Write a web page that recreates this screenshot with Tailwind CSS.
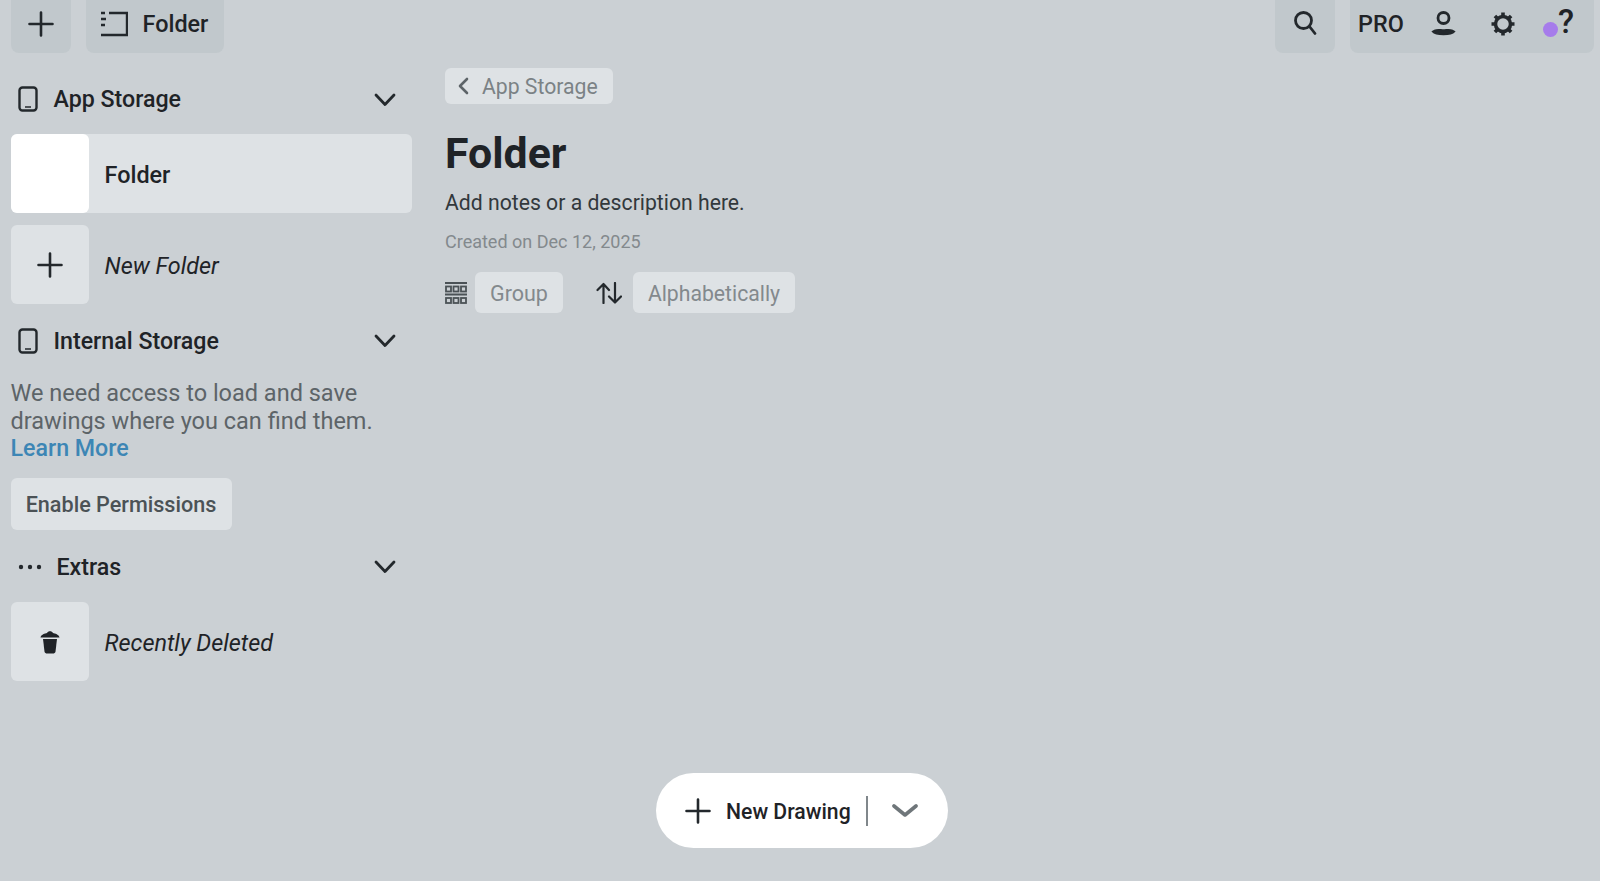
<!DOCTYPE html>
<html lang="en">
<head>
  <meta charset="UTF-8" />
  <title>Folder</title>
  <script src="https://cdn.jsdelivr.net/npm/@tailwindcss/browser@4"></script>
</head>
<body class="relative w-[1600px] h-[881px] overflow-hidden bg-[#cbd0d4] text-[#1f2327] font-['Roboto',sans-serif]">

  <!-- Top bar -->
  <header class="flex h-[53px] pl-[10.500px] pr-[6px] justify-between">
    <div class="flex gap-[15px]">
      <div class="w-[60px] h-full bg-[#c1c8cc] rounded-b-[8px] flex items-center justify-center pb-[6px]">
        <svg class="w-[26px] h-[26px]" viewBox="0 0 26 26" fill="none" stroke="#23282c" stroke-width="2.600" stroke-linecap="round"><path d="M13 1.500V24.500M1.500 13H24.500"/></svg>
      </div>
      <div class="w-[138px] h-full bg-[#c1c8cc] rounded-b-[8px] flex items-center pl-[14px] gap-[15px] pb-[6px]">
        <svg class="w-[28px] h-[26px]" viewBox="0 0 28 26" fill="none" stroke="#23282c" stroke-width="2.400"><path d="M9 2H27V24H1"/><path d="M1 2H5M1 8H6M1 14H5"/></svg>
        <span class="text-[23.400px] font-medium pt-[2px]">Folder</span>
      </div>
    </div>
    <div class="flex gap-[15px]">
      <div class="w-[60px] h-full bg-[#c1c8cc] rounded-b-[8px] flex items-center justify-center pb-[8px]">
        <svg class="w-[24px] h-[26px]" viewBox="0 0 24 26" fill="none" stroke="#23282c" stroke-width="2.800" stroke-linecap="round"><circle cx="10.500" cy="10.500" r="8"/><path d="M16.500 16.500L22 23.500"/></svg>
      </div>
      <div class="w-[244px] h-full bg-[#c1c8cc] rounded-b-[8px] flex items-center pl-[8px] pb-[6px]">
        <span class="text-[23.400px] font-medium w-[47px] shrink-0 pt-[2px]">PRO</span>
        <svg class="ml-[26px] w-[25px] h-[26px] shrink-0" viewBox="0 0 25 26" fill="none" stroke="#23282c" stroke-width="2.800"><circle cx="12.500" cy="7" r="5.500"/><path fill="#23282c" stroke-width="1.500" d="M1.500 20.500C5 17.500 9 19 12.500 19S20 17.500 23.500 20.500C20 24.500 5 24.500 1.500 20.500Z"/></svg>
        <svg class="ml-[34px] w-[26px] h-[26px] shrink-0" viewBox="0 0 26 26" fill="none" stroke="#23282c"><circle cx="13" cy="13" r="7.500" stroke-width="3.500"/><path stroke-width="3.600" d="M13 1.500V5M13 21V24.500M1.500 13H5M21 13H24.500M4.900 4.900L7.300 7.300M18.700 18.700L21.100 21.100M21.100 4.900L18.700 7.300M7.300 18.700L4.900 21.100"/></svg>
        <span class="relative ml-[24px] w-[36px] h-[32px] shrink-0">
          <span class="absolute left-[3px] top-[14px] w-[15px] h-[15px] rounded-full bg-[#a67ceb]"></span>
          <span class="absolute left-[18px] top-[-5px] text-[33px] font-medium leading-[38px]">?</span>
        </span>
      </div>
    </div>
  </header>

  <div class="flex pl-[10.500px]">
    <!-- Sidebar -->
    <aside class="w-[401.500px] shrink-0">
      <div class="flex items-center h-[81px] pt-[12px] pl-[7px] pr-[16px] gap-[16px]">
        <svg class="w-[20px] h-[26px] mb-[2px]" viewBox="0 0 20 26" fill="none" stroke="#23282c" stroke-width="2.400"><rect x="1.500" y="1.500" width="17" height="23" rx="3"/><path stroke-width="1.500" d="M7 21H13"/></svg>
        <span class="text-[23.200px] font-medium flex-1">App Storage</span>
        <svg class="w-[22px] h-[14px]" viewBox="0 0 22 14" fill="none" stroke="#23282c" stroke-width="2.800" stroke-linecap="round" stroke-linejoin="round"><path d="M2 2L11 11.500L20 2"/></svg>
      </div>
      <div class="flex items-center h-[79px] bg-[#dee2e5] rounded-[6px]">
        <div class="w-[78.500px] h-full bg-white rounded-[6px]"></div>
        <span class="ml-[15.500px] pt-[4px] text-[23.400px] font-medium">Folder</span>
      </div>
      <div class="flex items-center h-[79px] mt-[12px]">
        <div class="w-[78.500px] h-full bg-[#dee2e5] rounded-[6px] flex items-center justify-center">
          <svg class="w-[26px] h-[26px]" viewBox="0 0 26 26" fill="none" stroke="#23282c" stroke-width="2.600" stroke-linecap="round"><path d="M13 1.500V24.500M1.500 13H24.500"/></svg>
        </div>
        <span class="ml-[15.500px] pt-[4px] text-[23.400px] italic">New Folder</span>
      </div>

      <div class="flex items-center h-[74px] pl-[7px] pr-[16px] gap-[16px]">
        <svg class="w-[20px] h-[26px]" viewBox="0 0 20 26" fill="none" stroke="#23282c" stroke-width="2.400"><rect x="1.500" y="1.500" width="17" height="23" rx="3"/><path stroke-width="1.500" d="M7 21H13"/></svg>
        <span class="text-[23.200px] font-medium flex-1">Internal Storage</span>
        <svg class="w-[22px] h-[14px]" viewBox="0 0 22 14" fill="none" stroke="#23282c" stroke-width="2.800" stroke-linecap="round" stroke-linejoin="round"><path d="M2 2L11 11.500L20 2"/></svg>
      </div>
      <p class="text-[23.500px] leading-[27.500px] text-[#5d6468] mt-[2px]">We need access to load and save drawings where you can find them. <span class="block font-medium text-[#3d86b5] text-[23.200px]">Learn More</span></p>
      <div class="mt-[15.500px] w-[221px] h-[52px] pt-[3px] bg-[#dee2e5] rounded-[6px] flex items-center justify-center text-[21.600px] font-medium text-[#4b5256]">Enable Permissions</div>

      <div class="flex items-center h-[72px] pt-[2px] pl-[7px] pr-[16px] gap-[15px]">
        <svg class="w-[24px] h-[6px]" viewBox="0 0 24 6" fill="#23282c"><circle cx="3" cy="3" r="2.200"/><circle cx="12" cy="3" r="2.200"/><circle cx="21" cy="3" r="2.200"/></svg>
        <span class="text-[23.200px] font-medium flex-1">Extras</span>
        <svg class="w-[22px] h-[14px]" viewBox="0 0 22 14" fill="none" stroke="#23282c" stroke-width="2.800" stroke-linecap="round" stroke-linejoin="round"><path d="M2 2L11 11.500L20 2"/></svg>
      </div>
      <div class="flex items-center h-[79px]">
        <div class="w-[78.500px] h-full bg-[#dee2e5] rounded-[6px] flex items-center justify-center">
          <svg class="w-[20px] h-[24px]" viewBox="0 0 20 24" fill="#1f2327"><path d="M3 9H17L15.500 21.500C15.300 23 14 23.500 13 23.500H7C6 23.500 4.700 23 4.500 21.500Z"/><path d="M0.500 7.500C1 4.500 5 3.500 7 3C8 0.500 12 0.500 13 3C15 3.500 19 4.500 19.500 7.500Z"/></svg>
        </div>
        <span class="ml-[15.500px] pt-[4px] text-[23.400px] italic">Recently Deleted</span>
      </div>
    </aside>

    <!-- Main content -->
    <main class="ml-[33px] pt-[15px]">
      <div class="flex items-center w-[168px] h-[36px] bg-[#dee2e5] rounded-[6px] pl-[12px] gap-[13px] text-[21.200px] text-[#7b8286]">
        <svg class="w-[12px] h-[18px]" viewBox="0 0 12 18" fill="none" stroke="#5d6468" stroke-width="2.600" stroke-linecap="round" stroke-linejoin="round"><path d="M10 2L3 9L10 16"/></svg>
        <span class="pt-[2px]">App Storage</span>
      </div>
      <h1 class="mt-[24px] text-[42.800px] leading-[50px] font-bold">Folder</h1>
      <p class="mt-[12px] text-[21.200px] leading-[26px] text-[#32383c]">Add notes or a description here.</p>
      <p class="mt-[14px] text-[18px] leading-[24px] text-[#83898d]">Created on Dec 12, 2025</p>
      <div class="mt-[18px] flex items-center">
        <svg class="w-[22px] h-[24px]" viewBox="0 0 22 24" fill="none" stroke="#4b5256" stroke-width="1.800"><path d="M0 2H22M0 13.500H22"/><rect x="1" y="5.500" width="5" height="5"/><rect x="8.500" y="5.500" width="5" height="5"/><rect x="16" y="5.500" width="5" height="5"/><rect x="1" y="17" width="5" height="5"/><rect x="8.500" y="17" width="5" height="5"/><rect x="16" y="17" width="5" height="5"/></svg>
        <div class="ml-[8px] w-[88px] h-[41px] pt-[3px] bg-[#dee2e5] rounded-[6px] flex items-center justify-center text-[21.500px] text-[#83898d]">Group</div>
        <svg class="ml-[33px] w-[26px] h-[22px]" viewBox="0 0 26 22" fill="none" stroke="#23282c" stroke-width="2.200" stroke-linecap="round" stroke-linejoin="round"><path d="M7.500 21V2M1.500 8L7.500 2L13 8"/><path d="M19 1V20M13 14.500L19 20.500L25 14.500"/></svg>
        <div class="ml-[11px] w-[162px] h-[41px] pt-[2px] bg-[#dee2e5] rounded-[6px] flex items-center justify-center text-[21.200px] text-[#83898d]">Alphabetically</div>
      </div>
    </main>
  </div>

  <!-- Floating new drawing button -->
  <div class="absolute left-[656px] top-[773px] w-[292px] h-[75px] bg-white rounded-full flex items-center pl-[29px]">
    <svg class="w-[26px] h-[26px]" viewBox="0 0 26 26" fill="none" stroke="#23282c" stroke-width="2.600" stroke-linecap="round"><path d="M13 1.500V24.500M1.500 13H24.500"/></svg>
    <span class="ml-[15px] pt-[2px] text-[21.200px] font-medium w-[126px] whitespace-nowrap">New Drawing</span>
    <span class="ml-[14px] w-[2px] h-[30px] bg-[#80878b]"></span>
    <svg class="ml-[24px] w-[26px] h-[14px]" viewBox="0 0 26 14" fill="none" stroke="#6f767a" stroke-width="3.600" stroke-linecap="round" stroke-linejoin="round"><path d="M2 2L13 11L24 2"/></svg>
  </div>

</body>
</html>
